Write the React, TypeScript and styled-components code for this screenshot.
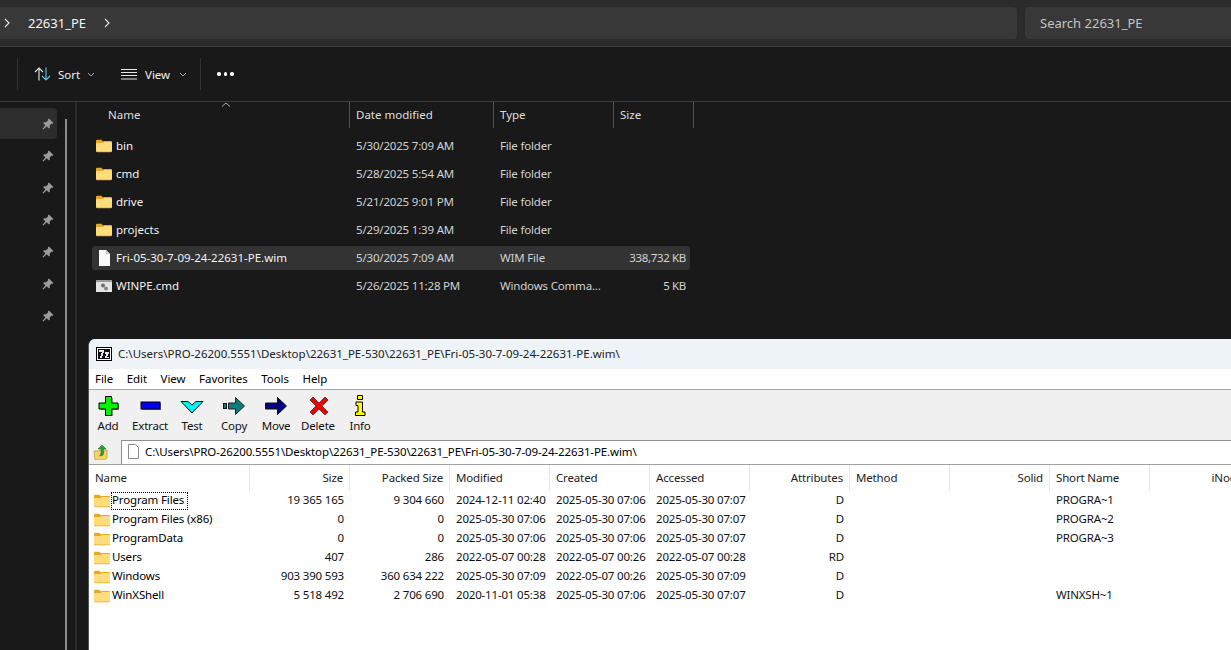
import React from 'react';
import styled, { createGlobalStyle } from 'styled-components';

const UI_FONT = '"Noto Sans", "Open Sans", "Liberation Sans", sans-serif';

const GlobalStyle = createGlobalStyle`
  html, body {
    margin: 0;
    padding: 0;
    background: #191919;
    overflow: hidden;
  }
  * {
    box-sizing: border-box;
  }
`;

const Screen = styled.div`
  position: relative;
  width: 1231px;
  height: 650px;
  overflow: hidden;
  background: #191919;
  font-family: ${UI_FONT};
  font-size: 11.5px;
  color: #fff;
`;

/* explorer window */
const AddressRow = styled.div`
  display: flex;
  gap: 8px;
  height: 47px;
  padding: 7px 0 7px 0;
  background: #2b2b2b;
  border-bottom: 1px solid #3d3d3d;
`;

const Breadcrumb = styled.div`
  display: flex;
  align-items: center;
  width: 1017px;
  height: 32px;
  padding-left: 3px;
  background: #383838;
  border-radius: 0 4px 4px 0;
  font-size: 13px;
  color: #f4f4f4;
`;

const CrumbText = styled.span`
  margin: 0 17px 0 17px;
`;

const SearchBox = styled.div`
  flex: 1;
  display: flex;
  align-items: center;
  height: 32px;
  padding-left: 15px;
  background: #383838;
  border-radius: 4px 0 0 4px;
  font-size: 13px;
  color: #c4c4c4;
`;

const CommandBar = styled.div`
  display: flex;
  align-items: center;
  height: 55px;
  padding-left: 17px;
  background: #191919;
  border-bottom: 1px solid #3a3a3a;
`;

const BarDivider = styled.div`
  width: 1px;
  height: 32px;
  background: #333;
`;

const CommandButton = styled.div<{ $width: number; $gap: number }>`
  display: flex;
  align-items: center;
  gap: ${(p) => p.$gap}px;
  width: ${(p) => p.$width}px;
  padding-left: 16px;
  color: #f0f0f0;
  font-size: 11.5px;
`;

const CaretSlot = styled.span`
  display: inline-flex;
  margin-left: 1px;
`;

const MoreButton = styled.div`
  display: flex;
  gap: 3px;
  margin-left: 16px;
`;

const MoreDot = styled.span`
  width: 3.5px;
  height: 3.5px;
  border-radius: 50%;
  background: #fff;
`;

const ExplorerBody = styled.div`
  display: flex;
  height: 548px;
`;

const Sidebar = styled.div`
  display: flex;
  flex: none;
  width: 77px;
  border-right: 2px solid #2a2a2a;
`;

const PinList = styled.div`
  display: flex;
  flex-direction: column;
  gap: 1px;
  width: 65px;
  padding-top: 6px;
`;

const PinRow = styled.div<{ $active?: boolean }>`
  display: flex;
  align-items: center;
  justify-content: flex-end;
  width: 57px;
  height: 31px;
  padding-right: 3px;
  background: ${(p) => (p.$active ? '#2d2d2d' : 'transparent')};
  border-radius: 0 4px 4px 0;
`;

const SideThumb = styled.div`
  width: 2px;
  margin-top: 17px;
  background: #8c8c8c;
`;

const FileArea = styled.div`
  flex: 1;
  position: relative;
`;

const FileHeader = styled.div`
  display: grid;
  grid-template-columns: 273px 144px 120px 80px;
  height: 26px;
`;

const HeaderCell = styled.div<{ $first?: boolean }>`
  display: flex;
  align-items: center;
  padding-left: ${(p) => (p.$first ? 31 : 6)}px;
  padding-bottom: 2px;
  border-right: 1px solid #555;
  color: #dedede;
  font-size: 11.5px;
`;

const SortCaret = styled.svg`
  position: absolute;
  left: 144px;
  top: 0;
`;

const FileRows = styled.div`
  display: flex;
  flex-direction: column;
  gap: 4px;
  padding: 6px 0 0 15px;
`;

const FileRow = styled.div<{ $selected?: boolean }>`
  display: grid;
  grid-template-columns: 258px 144px 120px 76px;
  align-items: center;
  width: 598px;
  height: 24px;
  background: ${(p) => (p.$selected ? '#333333' : 'transparent')};
  border-radius: 3px;
`;

const FileName = styled.div`
  display: flex;
  align-items: center;
  gap: 4px;
  padding-left: 4px;
  color: #f2f2f2;
  font-size: 11.5px;
`;

const NameText = styled.span`
  padding-bottom: 2px;
`;

const FileCell = styled.div<{ $right?: boolean }>`
  padding: 0 ${(p) => (p.$right ? 4 : 0)}px 2px 6px;
  text-align: ${(p) => (p.$right ? 'right' : 'left')};
  color: #d2d2d2;
  font-size: 11.5px;
  letter-spacing: ${(p) => (p.$right ? -0.35 : -0.18)}px;
  white-space: nowrap;
  overflow: hidden;
`;

/* 7-Zip window, floats over the explorer */
const ZipWindow = styled.div`
  position: absolute;
  left: 88px;
  top: 339px;
  width: 1300px;
  height: 340px;
  background: #fff;
  border-radius: 7px 0 0 0;
  border-left: 1px solid #555;
  color: #000;
  overflow: hidden;
`;

const ZipTitle = styled.div`
  display: flex;
  align-items: center;
  gap: 6px;
  height: 30px;
  padding: 0 0 2px 7px;
  background: #eef3f8;
  font-size: 11.5px;
  color: #222;
`;

const ZipLogo = styled.span`
  display: inline-flex;
  flex: none;
  margin-top: 2px;
`;

const ZipMenu = styled.div`
  display: flex;
  gap: 13.5px;
  height: 21px;
  padding: 0 0 2px 6px;
  align-items: center;
  background: #fff;
  border-bottom: 1px solid #a8a8a8;
  font-size: 11.5px;
  letter-spacing: -0.05px;
`;

const ZipTools = styled.div`
  display: flex;
  height: 50px;
  margin-left: -2px;
  background: #f0f0f0;
`;

const ToolButton = styled.div`
  display: flex;
  flex-direction: column;
  align-items: center;
  width: 42px;
  padding-top: 5px;
  font-size: 11.5px;
  color: #111;
  letter-spacing: -0.2px;
`;

const ToolIcon = styled.svg`
  display: block;
  height: 22px;
  margin-bottom: 1px;
`;

const PathRow = styled.div`
  display: flex;
  align-items: stretch;
  height: 25px;
  background: #f0f0f0;
  border-bottom: 1px solid #a0a0a0;
`;

const UpButton = styled.div`
  display: flex;
  align-items: center;
  justify-content: center;
  width: 32px;
  padding-right: 9px;
`;

const PathInput = styled.div`
  flex: 1;
  display: flex;
  align-items: center;
  gap: 5px;
  padding: 0 0 2px 5px;
  background: #fff;
  border: 1px solid #8f8f8f;
  border-bottom: none;
  font-size: 11.5px;
  letter-spacing: -0.12px;
`;

const ListHeader = styled.div`
  display: grid;
  grid-template-columns: 161px repeat(10, 100px);
  height: 26px;
  background: #fff;
`;

const ListHeadCell = styled.div<{ $right?: boolean }>`
  display: flex;
  align-items: center;
  justify-content: ${(p) => (p.$right ? 'flex-end' : 'flex-start')};
  padding: 0 6px 2px;
  border-right: 1px solid #e5e5e5;
  font-size: 11.5px;
  letter-spacing: -0.15px;
  color: #222;
  white-space: nowrap;
`;

const ListRow = styled.div`
  display: grid;
  grid-template-columns: 161px repeat(10, 100px);
  align-items: center;
  height: 19px;
`;

const ListName = styled.div`
  display: flex;
  align-items: center;
  gap: 1px;
  padding-left: 5px;
  font-size: 11.5px;
  letter-spacing: -0.15px;
  white-space: nowrap;
`;

const NameLabel = styled.span<{ $focused?: boolean }>`
  height: 18px;
  line-height: 16px;
  padding: 0 ${(p) => (p.$focused ? 4 : 1)}px 0 1px;
  outline: ${(p) => (p.$focused ? '1px dotted #000' : 'none')};
  outline-offset: -1px;
`;

const ListCell = styled.div<{ $right?: boolean }>`
  padding: 0 6px 2px;
  text-align: ${(p) => (p.$right ? 'right' : 'left')};
  font-size: 11.5px;
  letter-spacing: -0.18px;
  color: #111;
  white-space: nowrap;
`;

const Chevron = () => (
  <svg width="8" height="10" viewBox="0 0 8 10" fill="none" stroke="#e8e8e8" strokeWidth="1.1">
    <path d="M2 1l4 4-4 4" />
  </svg>
);

const SmallCaret = () => (
  <svg width="8" height="5" viewBox="0 0 8 5" fill="none" stroke="#aaa" strokeWidth="1">
    <path d="M1 1l3 3 3-3" />
  </svg>
);

const SortIcon = () => (
  <svg width="17" height="14" viewBox="0 0 17 14" fill="none" strokeWidth="1.1">
    <path d="M5 13.5V1M1 5l4-4 4 4" stroke="#e8e8e8" />
    <path d="M12 .5V13M8 9l4 4 4-4" stroke="#5cc4f2" />
  </svg>
);

const ViewIcon = () => (
  <svg width="16" height="11" viewBox="0 0 16 11" stroke="#e8e8e8" strokeWidth="1">
    <path d="M0 .5h16M0 3.5h16M0 6.5h16M0 10h16" />
  </svg>
);

const PinIcon = () => (
  <svg width="12" height="12" viewBox="0 0 12 12" fill="#9a9a9a">
    <path d="M7 .6l4.4 4.4-1 .9-.7-.3-2 2 .1 2-.9 1-2.3-2.4L1.4 11.4.6 10.6l2.8-3.2L1.100 5.100l1-.9 2 .1 2-2-.2-.8z" />
  </svg>
);

const FolderIcon = ({ size = 16 }: { size?: number }) => (
  <svg width={size} height={(size * 14) / 16} viewBox="0 0 16 14">
    <path d="M0 2a1.2 1.2 0 0 1 1.2-1.2h4.2l1.6 1.6v3H0z" fill="#e9a820" />
    <path d="M0 4a1 1 0 0 1 1-1h5.6l1.2-.9H15a1 1 0 0 1 1 1V12a1.2 1.2 0 0 1-1.2 1.2H1.2A1.2 1.2 0 0 1 0 12z" fill="#e9a820" />
    <path d="M0 5a1 1 0 0 1 1-1h6l1-.9h7a1 1 0 0 1 1 1V11.6a1 1 0 0 1-1 1H1a1 1 0 0 1-1-1z" fill="#ffdc7c" />
  </svg>
);

const DocIcon = () => (
  <svg width="16" height="16" viewBox="0 0 16 16">
    <path d="M3 0h7l4 4v12H3z" fill="#fafafa" />
    <path d="M10 0l4 4h-4z" fill="#c8c8c8" />
  </svg>
);

const CmdIcon = () => (
  <svg width="16" height="12" viewBox="0 0 16 12">
    <rect width="16" height="12" fill="#e4e4e4" />
    <rect width="16" height="2" fill="#9a9a9a" />
    <circle cx="7" cy="5.5" r="2" fill="#6d6d6d" />
    <circle cx="10" cy="8.5" r="2" fill="#858585" />
  </svg>
);

const ZipGlyph = () => (
  <svg width="16" height="14" viewBox="0 0 16 14" shapeRendering="crispEdges">
    <rect width="16" height="14" fill="#000" />
    <rect x="1" y="1" width="14" height="12" fill="#fff" />
    <rect x="2" y="2" width="12" height="10" fill="#111" />
    <path d="M3 3h5v2L6 11H4l2-6H3z" fill="#e8e8e8" />
    <path d="M9 5h4v1.5L11 9.5h2V11H9V9.5L11 6.5H9z" fill="#e8e8e8" />
  </svg>
);

const toolIcons: Record<string, React.ReactNode> = {
  Add: (
    <ToolIcon width="24" viewBox="0 0 24 22">
      <path d="M10 2h6v6h6v6h-6v6h-6v-6H4V8h6z" fill="#888" transform="translate(1 1)" />
      <path d="M9.5 1.5h6V8H22v6h-6.500v6.500h-6V14H3V8h6.500z" fill="#00f500" stroke="#000" />
    </ToolIcon>
  ),
  Extract: (
    <ToolIcon width="24" viewBox="0 0 24 22">
      <rect x="4" y="8" width="19" height="7" fill="#777" />
      <rect x="3" y="7" width="19" height="7" fill="#0000f0" stroke="#000" />
    </ToolIcon>
  ),
  Test: (
    <ToolIcon width="24" viewBox="0 0 24 22">
      <path d="M1 6.5h7l4 3.5 4-3.5h7L12 18z" fill="#00f4f4" stroke="#111" strokeLinejoin="bevel" />
    </ToolIcon>
  ),
  Copy: (
    <ToolIcon width="24" viewBox="0 0 24 22">
      <rect x="1.5" y="8.5" width="3" height="5" fill="#0c8080" stroke="#111" />
      <path d="M6.5 8h7V2.5l9 8.5-9 8.5V14h-7z" fill="#0c7c7c" stroke="#222" />
    </ToolIcon>
  ),
  Move: (
    <ToolIcon width="24" viewBox="0 0 24 22">
      <path d="M1.5 8h12V2.5l9 8.5-9 8.5V14h-12z" fill="#000080" stroke="#111" />
    </ToolIcon>
  ),
  Delete: (
    <ToolIcon width="24" viewBox="0 0 24 22">
      <path d="M7 2l6 6 6-6 3 3-6 6 6 6-3 3-6-6-6 6-3-3 6-6-6-6z" fill="#f00000" stroke="#222" strokeWidth=".7" />
    </ToolIcon>
  ),
  Info: (
    <ToolIcon width="24" viewBox="0 0 24 22">
      <path d="M9.5.5h5v4h-5zM8 7h6.500v10H17v3.500H7.500V17H10v-6.500H8z" fill="#ffff00" stroke="#000" />
    </ToolIcon>
  ),
};

const files = [
  { name: 'bin', date: '5/30/2025 7:09 AM', type: 'File folder', size: '', icon: 'folder' },
  { name: 'cmd', date: '5/28/2025 5:54 AM', type: 'File folder', size: '', icon: 'folder' },
  { name: 'drive', date: '5/21/2025 9:01 PM', type: 'File folder', size: '', icon: 'folder' },
  { name: 'projects', date: '5/29/2025 1:39 AM', type: 'File folder', size: '', icon: 'folder' },
  { name: 'Fri-05-30-7-09-24-22631-PE.wim', date: '5/30/2025 7:09 AM', type: 'WIM File', size: '338,732 KB', icon: 'doc' },
  { name: 'WINPE.cmd', date: '5/26/2025 11:28 PM', type: 'Windows Comma...', size: '5 KB', icon: 'cmd' },
];

const zipColumns = [
  { label: 'Name' },
  { label: 'Size', right: true },
  { label: 'Packed Size', right: true },
  { label: 'Modified' },
  { label: 'Created' },
  { label: 'Accessed' },
  { label: 'Attributes', right: true },
  { label: 'Method' },
  { label: 'Solid', right: true },
  { label: 'Short Name' },
  { label: 'iNode', right: true },
];

const zipRows = [
  ['Program Files', '19 365 165', '9 304 660', '2024-12-11 02:40', '2025-05-30 07:06', '2025-05-30 07:07', 'D', '', '', 'PROGRA~1', ''],
  ['Program Files (x86)', '0', '0', '2025-05-30 07:06', '2025-05-30 07:06', '2025-05-30 07:07', 'D', '', '', 'PROGRA~2', ''],
  ['ProgramData', '0', '0', '2025-05-30 07:06', '2025-05-30 07:06', '2025-05-30 07:07', 'D', '', '', 'PROGRA~3', ''],
  ['Users', '407', '286', '2022-05-07 00:28', '2022-05-07 00:26', '2022-05-07 00:28', 'RD', '', '', '', ''],
  ['Windows', '903 390 593', '360 634 222', '2025-05-30 07:09', '2022-05-07 00:26', '2025-05-30 07:09', 'D', '', '', '', ''],
  ['WinXShell', '5 518 492', '2 706 690', '2020-11-01 05:38', '2025-05-30 07:06', '2025-05-30 07:07', 'D', '', '', 'WINXSH~1', ''],
];

const WIM_PATH = 'C:\\Users\\PRO-26200.5551\\Desktop\\22631_PE-530\\22631_PE\\Fri-05-30-7-09-24-22631-PE.wim\\';

const App = () => {
  return (
    <Screen>
      <GlobalStyle />
      <AddressRow>
        <Breadcrumb>
          <Chevron />
          <CrumbText>22631_PE</CrumbText>
          <Chevron />
        </Breadcrumb>
        <SearchBox>Search 22631_PE</SearchBox>
      </AddressRow>

      <CommandBar>
        <BarDivider />
        <CommandButton $width={87} $gap={7}>
          <SortIcon />
          <span>Sort</span>
          <SmallCaret />
        </CommandButton>
        <CommandButton $width={95} $gap={8}>
          <ViewIcon />
          <span>View</span>
          <CaretSlot>
            <SmallCaret />
          </CaretSlot>
        </CommandButton>
        <BarDivider />
        <MoreButton>
          <MoreDot />
          <MoreDot />
          <MoreDot />
        </MoreButton>
      </CommandBar>

      <ExplorerBody>
        <Sidebar>
          <PinList>
            {[0, 1, 2, 3, 4, 5, 6].map((i) => (
              <PinRow key={i} $active={i === 0}>
                <PinIcon />
              </PinRow>
            ))}
          </PinList>
          <SideThumb />
        </Sidebar>
        <FileArea>
          <SortCaret width="10" height="5" viewBox="0 0 10 5" fill="none" stroke="#aaa">
            <path d="M1 4.5l4-3.5 4 3.5" />
          </SortCaret>
          <FileHeader>
            <HeaderCell $first>Name</HeaderCell>
            <HeaderCell>Date modified</HeaderCell>
            <HeaderCell>Type</HeaderCell>
            <HeaderCell>Size</HeaderCell>
          </FileHeader>
          <FileRows>
            {files.map((f) => (
              <FileRow key={f.name} $selected={f.icon === 'doc'}>
                <FileName>
                  {f.icon === 'folder' && <FolderIcon />}
                  {f.icon === 'doc' && <DocIcon />}
                  {f.icon === 'cmd' && <CmdIcon />}
                  <NameText>{f.name}</NameText>
                </FileName>
                <FileCell>{f.date}</FileCell>
                <FileCell>{f.type}</FileCell>
                <FileCell $right>{f.size}</FileCell>
              </FileRow>
            ))}
          </FileRows>
        </FileArea>
      </ExplorerBody>

      <ZipWindow>
        <ZipTitle>
          <ZipLogo>
            <ZipGlyph />
          </ZipLogo>
          {WIM_PATH}
        </ZipTitle>
        <ZipMenu>
          {['File', 'Edit', 'View', 'Favorites', 'Tools', 'Help'].map((m) => (
            <span key={m}>{m}</span>
          ))}
        </ZipMenu>
        <ZipTools>
          {Object.keys(toolIcons).map((name) => (
            <ToolButton key={name}>
              {toolIcons[name]}
              {name}
            </ToolButton>
          ))}
        </ZipTools>
        <PathRow>
          <UpButton>
            <svg width="16" height="16" viewBox="0 0 16 16">
              <path d="M1 7h5l1-1h7v8l-3 2H2z" fill="#f2d36b" stroke="#a98a2c" strokeWidth=".6" />
              <path d="M9 1l4 4h-2.5v5c0 1-2 2-4 2 1-1 1.5-2 1.5-3V5H5z" fill="#2ca02c" stroke="#1a661a" strokeWidth=".5" />
            </svg>
          </UpButton>
          <PathInput>
            <svg width="13" height="15" viewBox="0 0 13 15" fill="#fff" stroke="#8a8a8a">
              <path d="M1.5.5h7l3 3v11h-10z" />
            </svg>
            {WIM_PATH}
          </PathInput>
        </PathRow>
        <ListHeader>
          {zipColumns.map((c) => (
            <ListHeadCell key={c.label} $right={c.right}>
              {c.label}
            </ListHeadCell>
          ))}
        </ListHeader>
        {zipRows.map((row, i) => (
          <ListRow key={row[0]}>
            <ListName>
              <FolderIcon />
              <NameLabel $focused={i === 0}>{row[0]}</NameLabel>
            </ListName>
            {row.slice(1).map((value, j) => (
              <ListCell key={j} $right={zipColumns[j + 1].right}>
                {value}
              </ListCell>
            ))}
          </ListRow>
        ))}
      </ZipWindow>
    </Screen>
  );
};

export default App;
